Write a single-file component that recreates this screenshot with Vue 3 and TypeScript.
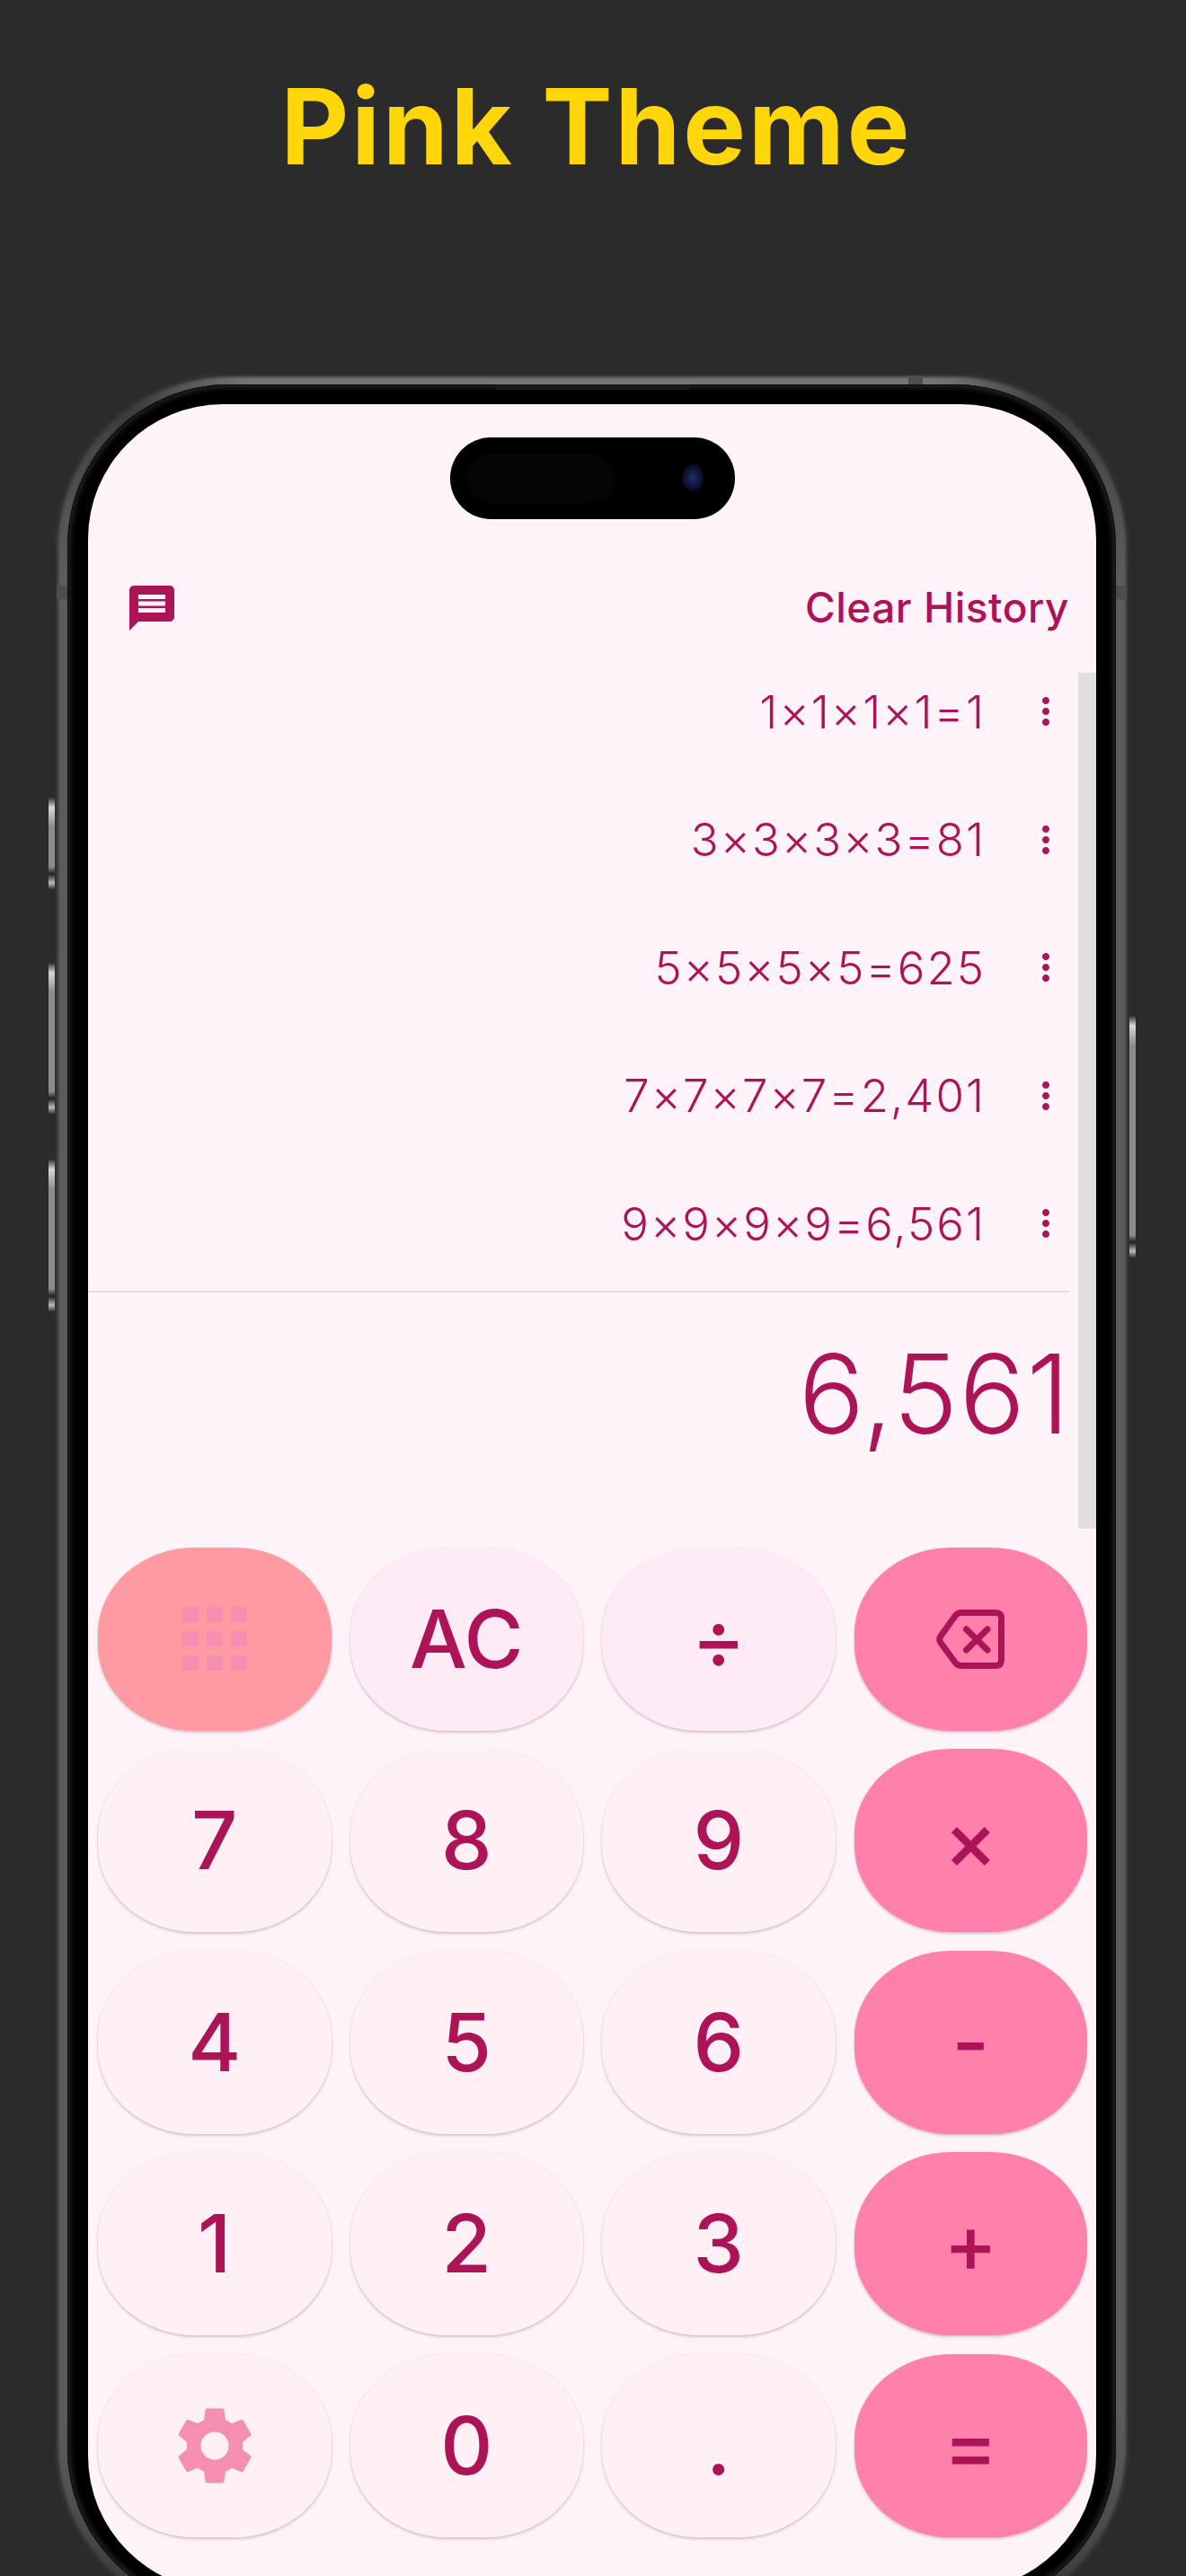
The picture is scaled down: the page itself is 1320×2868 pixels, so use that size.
<script setup lang="ts">
interface Key {
  label: string
  icon?: 'grid' | 'back' | 'gear'
  kind: 'num' | 'soft' | 'op' | 'mode'
}

const history: string[] = [
  '1×1×1×1=1',
  '3×3×3×3=81',
  '5×5×5×5=625',
  '7×7×7×7=2,401',
  '9×9×9×9=6,561',
]

const keys: Key[] = [
  { label: '', icon: 'grid', kind: 'mode' },
  { label: 'AC', kind: 'soft' },
  { label: '÷', kind: 'soft' },
  { label: '', icon: 'back', kind: 'op' },
  { label: '7', kind: 'num' },
  { label: '8', kind: 'num' },
  { label: '9', kind: 'num' },
  { label: '×', kind: 'op' },
  { label: '4', kind: 'num' },
  { label: '5', kind: 'num' },
  { label: '6', kind: 'num' },
  { label: '-', kind: 'op' },
  { label: '1', kind: 'num' },
  { label: '2', kind: 'num' },
  { label: '3', kind: 'num' },
  { label: '+', kind: 'op' },
  { label: '', icon: 'gear', kind: 'num' },
  { label: '0', kind: 'num' },
  { label: '.', kind: 'num' },
  { label: '=', kind: 'op' },
]
</script>

<template>
  <div class="page">
    <h1 class="title">Pink Theme</h1>

    <div class="phone">
      <!-- side buttons -->
      <i class="side left b1"></i>
      <i class="side left b2"></i>
      <i class="side left b3"></i>
      <i class="side right b4"></i>
      <!-- antenna lines -->
      <i class="band band-l"></i>
      <i class="band band-r"></i>
      <i class="band-top"></i>
      <i class="speaker"></i>

      <div class="bezel">
        <div class="screen">
          <div class="island">
            <span class="island-sensor"></span>
            <span class="island-cam"></span>
          </div>

          <header class="bar">
            <svg class="msg" viewBox="0 0 24 24">
              <path d="M20 2H4c-1.1 0-1.99.9-1.99 2L2 22l4-4h14c1.1 0 2-.9 2-2V4c0-1.1-.9-2-2-2zm-2 12H6v-2h12v2zm0-3H6V9h12v2zm0-3H6V6h12v2z" />
            </svg>
            <span class="clear">Clear History</span>
          </header>

          <ul class="history">
            <li v-for="row in history" :key="row" class="row">
              <span class="expr">{{ row }}</span>
              <svg class="more" viewBox="0 0 24 24">
                <path d="M12 8c1.1 0 2-.9 2-2s-.9-2-2-2-2 .9-2 2 .9 2 2 2zm0 2c-1.1 0-2 .9-2 2s.9 2 2 2 2-.9 2-2-.9-2-2-2zm0 6c-1.1 0-2 .9-2 2s.9 2 2 2 2-.9 2-2-.9-2-2-2z" />
              </svg>
            </li>
          </ul>

          <div class="sep"></div>
          <div class="display">6,561</div>
          <div class="scrollbar"></div>

          <div class="keys">
            <button v-for="(k, i) in keys" :key="i" class="key" :class="k.kind">
              <span v-if="k.icon === 'grid'" class="grid-ico">
                <i v-for="n in 9" :key="n"></i>
              </span>
              <svg v-else-if="k.icon === 'back'" class="back-ico" viewBox="0 0 76 66">
                <path d="M28 3.500H66Q72.500 3.500 72.500 10V56Q72.500 62.500 66 62.500H28Q24 62.500 21.500 59.500L5 37Q2.500 33 5 29.500L21.500 6.500Q24 3.500 28 3.500Z" />
                <path d="M33.500 22L57 45M57 22L33.500 45" />
              </svg>
              <svg v-else-if="k.icon === 'gear'" class="gear-ico" viewBox="0 0 24 24">
                <path d="M19.14 12.94c.04-.3.06-.61.06-.94 0-.32-.02-.64-.07-.94l2.03-1.58c.18-.14.23-.41.12-.61l-1.92-3.32c-.12-.22-.37-.29-.59-.22l-2.39.96c-.5-.38-1.03-.7-1.62-.94l-.36-2.54c-.04-.24-.24-.41-.48-.41h-3.84c-.24 0-.43.17-.47.41l-.36 2.54c-.59.24-1.13.57-1.62.94l-2.39-.96c-.22-.08-.47 0-.59.22L2.74 8.87c-.12.21-.08.47.12.61l2.03 1.58c-.05.3-.09.63-.09.94s.02.64.07.94l-2.03 1.58c-.18.14-.23.41-.12.61l1.92 3.32c.12.22.37.29.59.22l2.39-.96c.5.38 1.03.7 1.62.94l.36 2.54c.05.24.24.41.48.41h3.84c.24 0 .44-.17.47-.41l.36-2.54c.59-.24 1.13-.56 1.62-.94l2.39.96c.22.08.47 0 .59-.22l1.92-3.32c.12-.22.07-.47-.12-.61l-2.01-1.58zM12 15.6c-1.98 0-3.6-1.62-3.6-3.6s1.62-3.6 3.6-3.6 3.6 1.62 3.6 3.6-1.62 3.6-3.6 3.6z" />
              </svg>
              <template v-else>{{ k.label }}</template>
            </button>
          </div>
        </div>
      </div>
    </div>
  </div>
</template>

<style>
html, body {
  margin: 0;
  background: #2b2b2b;
}
</style>

<style scoped>
.page {
  width: 1320px;
  height: 2868px;
  overflow: hidden;
  background: #2b2b2b;
  font-family: Inter, Roboto, "Liberation Sans", sans-serif;
}

.title {
  margin: 0;
  height: 416px;
  padding: 66px 0 0 8px;
  box-sizing: border-box;
  text-align: center;
  font: 700 117px/150px Inter, "Liberation Sans", sans-serif;
  letter-spacing: 3px;
  color: #ffd60a;
}

/* phone shell */
.phone {
  position: relative;
  width: 1196px;
  height: 2502px;
  margin-left: 61px;
  box-sizing: border-box;
  padding: 12px 15px 12px 14px;
  border-radius: 195px;
  background: conic-gradient(#757575 0 17deg, #3c3c3c 23deg, #5c5c5c 30deg 150deg, #3c3c3c 157deg, #757575 163deg 197deg, #3c3c3c 203deg, #5c5c5c 210deg 330deg, #3c3c3c 337deg, #757575 343deg);
  box-shadow: inset 0 0 0 2px #2f2f2f, inset 0 0 3px 4px #383838;
}

.bezel {
  height: 100%;
  box-sizing: border-box;
  padding: 22px 22px 22px 23px;
  border-radius: 180px;
  background: #000;
  box-shadow: inset 0 0 0 1px #0a0a0a, inset 0 0 6px 3px #2a2a2a;
}

.screen {
  position: relative;
  height: 100%;
  overflow: hidden;
  border-radius: 150px;
  background: #fef3f9;
}

.side {
  position: absolute;
  width: 7px;
  border-radius: 2px 0 0 2px;
  background: linear-gradient(180deg, #222 0, #d8d8d2 12px, #8b8b88 34px, #8b8b88 calc(100% - 26px), #1f1f1f calc(100% - 18px), #bbb calc(100% - 8px), #222 100%);
}
.side.left { left: -7px; }
.side.right { right: -7px; border-radius: 0 2px 2px 0; }
.b1 { top: 471px; height: 104px; }
.b2 { top: 655px; height: 170px; }
.b3 { top: 874px; height: 171px; }
.b4 { top: 714px; height: 271px; }

.band {
  position: absolute;
  top: 236px;
  width: 12px;
  height: 15px;
  background: #4b4d50;
}
.band-l { left: 2px; }
.band-r { right: 3px; }
.band-top {
  position: absolute;
  top: 2px;
  left: 950px;
  width: 16px;
  height: 10px;
  background: #4b4d50;
}
.speaker {
  position: absolute;
  top: 12px;
  left: 490px;
  width: 218px;
  height: 6px;
  border-radius: 0 0 4px 4px;
  background: #1a1a1a;
}

/* dynamic island */
.island {
  position: absolute;
  top: 37px;
  left: 403px;
  width: 317px;
  height: 91px;
  border-radius: 46px;
  background: #000;
}
.island-sensor {
  position: absolute;
  top: 18px;
  left: 18px;
  width: 165px;
  height: 55px;
  border-radius: 28px;
  background: #050505;
}
.island-cam {
  position: absolute;
  top: 30px;
  left: 258px;
  width: 24px;
  height: 30px;
  border-radius: 50%;
  background: radial-gradient(ellipse at center, #1c2f6e 0, #10163c 45%, #08081a 75%, #000 100%);
}

.bar {
  display: flex;
  align-items: center;
  justify-content: space-between;
  height: 60px;
  padding: 197px 30px 0 41px;
}
.msg {
  width: 60px;
  height: 60px;
  fill: #ad1457;
}
.clear {
  padding-bottom: 2px;
  font-size: 46px;
  font-weight: 450;
  letter-spacing: 0.5px;
  color: #ad1457;
}

.history {
  list-style: none;
  margin: 14px 0 0;
  padding: 0;
}
.row {
  display: flex;
  align-items: center;
  justify-content: flex-end;
  height: 142.5px;
  padding-right: 32px;
}
.expr {
  font-size: 51px;
  font-weight: 350;
  letter-spacing: 2px;
  color: #ad1457;
}
.more {
  width: 48px;
  height: 48px;
  margin-left: 43px;
  fill: #ad1457;
}

.sep {
  width: 1092px;
  height: 2px;
  margin-top: 3px;
  background: #e5dbe3;
}

.display {
  height: 284px;
  padding: 28px 28px 0 0;
  box-sizing: border-box;
  text-align: right;
  font-size: 122px;
  line-height: 170px;
  font-weight: 350;
  letter-spacing: 1.5px;
  color: #ad1457;
}

.scrollbar {
  position: absolute;
  top: 299px;
  right: 0;
  width: 20px;
  height: 953px;
  background: #e1dde1;
}

.keys {
  display: grid;
  grid-template-columns: repeat(4, 259.5px);
  grid-auto-rows: 204px;
  gap: 20.5px 21px;
  padding-left: 11px;
}

.key {
  display: flex;
  align-items: center;
  justify-content: center;
  padding: 0;
  border: 0;
  border-radius: 108px / 96px;
  font: 450 90px/1 Inter, Roboto, "Liberation Sans", sans-serif;
  color: #ad1457;
  box-shadow: 0 2px 3px rgba(90, 30, 60, 0.22), 0 0 2px rgba(90, 30, 60, 0.08);
}
.key.num { background: #fff0f5; }
.key.soft { background: #feebf6; }
.key.op { background: #ff80ab; }
.key.mode { background: #ff99a2; }

.grid-ico {
  display: grid;
  grid-template-columns: repeat(3, 17.5px);
  grid-auto-rows: 17.5px;
  gap: 9.5px;
}
.grid-ico i {
  background: #f48fb1;
}

.back-ico {
  width: 76px;
  height: 66px;
  fill: none;
  stroke: #ad1457;
  stroke-width: 7;
  stroke-linecap: round;
  stroke-linejoin: round;
}

.gear-ico {
  width: 104px;
  height: 104px;
  fill: #f48fb1;
}
</style>
